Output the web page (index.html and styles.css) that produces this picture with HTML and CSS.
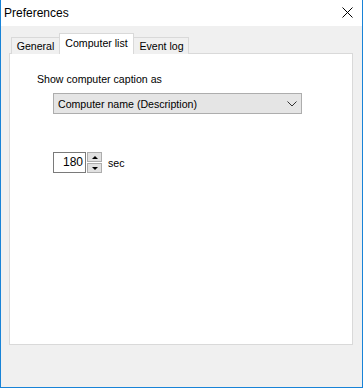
FILE: index.html
```html
<!DOCTYPE html>
<html lang="en">
  <head>
    <meta charset="UTF-8" />
    <meta name="viewport" content="width=device-width, initial-scale=1.0" />
    <title>Preferences</title>

    <link rel="stylesheet" href="styles.css">
  </head>
  <body>
    <div class="window">
      <div class="titlebar">
        <span class="title">Preferences</span>
        <svg class="close" width="11" height="11" viewBox="0 0 11 11">
          <path d="M0.5 0.5 L10.5 10.5 M10.5 0.5 L0.5 10.5" stroke="#000" stroke-width="1" fill="none" />
        </svg>
      </div>

      <div class="content">
        <div class="tabs">
          <div class="tab tab-general">General</div>
          <div class="tab tab-list active">Computer list</div>
          <div class="tab tab-log">Event log</div>
        </div>

        <div class="panel">
          <div class="caption">Show computer caption as</div>
          <div class="select">
            <span>Computer name (Description)</span>
            <svg width="10" height="6" viewBox="0 0 10 6">
              <path d="M0.5 0.5 L5 5 L9.5 0.5" stroke="#333" stroke-width="1" fill="none" />
            </svg>
          </div>

          <div class="spin-row">
            <div class="spin-input">180</div>
            <div class="spin-buttons">
              <div class="spin-btn"><span class="arrow-up"></span></div>
              <div class="spin-btn"><span class="arrow-down"></span></div>
            </div>
            <span class="unit">sec</span>
          </div>
        </div>
      </div>
    </div>
  </body>
</html>
```

FILE: styles.css
```css
body {
  margin: 0;
  font-family: "Liberation Sans", Arial, sans-serif;
  font-size: 10.6px;
  color: #000;
}

.window {
  width: 363px;
  height: 388px;
  box-sizing: border-box;
  border: 1px solid #1883d7;
  border-top: none;
  background: #f0f0f0;
}

.titlebar {
  height: 26px;
  background: #fff;
  display: flex;
  justify-content: space-between;
  align-items: center;
  padding: 0 9px 0 3px;
}

.title {
  font-size: 12px;
  margin-top: -1px;
}

.close {
  margin-top: -2px;
}

.content {
  padding: 8px 9px 0 8px;
}

.tabs {
  display: flex;
  align-items: flex-end;
  margin-left: 2px;
  height: 20px;
  margin-bottom: -1px;
  position: relative;
}

.tab {
  height: 17px;
  box-sizing: border-box;
  border: 1px solid #d9d9d9;
  border-bottom: none;
  background: #f0f0f0;
  padding-top: 2px;
  text-align: center;
  line-height: 13px;
}

.tab-general {
  width: 48px;
  border-right: none;
}

.tab-list {
  width: 75px;
}

.tab-log {
  width: 55px;
  border-left: none;
  padding-left: 1px;
}

.tab.active {
  height: 21px;
  background: #fff;
  padding-top: 3px;
  position: relative;
  z-index: 1;
}

.panel {
  height: 292px;
  box-sizing: border-box;
  border: 1px solid #d9d9d9;
  background: #fff;
  padding: 19px 0 0 27px;
}

.caption {
  line-height: 13px;
}

.select {
  margin: 7px 0 0 16px;
  width: 249px;
  height: 21px;
  box-sizing: border-box;
  border: 1px solid #adadad;
  background: #e5e5e5;
  display: flex;
  justify-content: space-between;
  align-items: center;
  padding: 0 4px 0 4px;
}

.spin-row {
  margin: 38px 0 0 16px;
  display: flex;
  align-items: center;
}

.spin-input {
  width: 33px;
  height: 21px;
  box-sizing: border-box;
  border: 1px solid #7a7a7a;
  text-align: right;
  padding-right: 2px;
  line-height: 19px;
  font-size: 12px;
}

.spin-buttons {
  display: flex;
  flex-direction: column;
  gap: 1px;
  margin-left: 1px;
  height: 21px;
}

.spin-btn {
  width: 15px;
  height: 10px;
  box-sizing: border-box;
  border: 1px solid #adadad;
  background: #e1e1e1;
  display: flex;
  justify-content: center;
  align-items: center;
}

.arrow-up {
  border-left: 3px solid transparent;
  border-right: 3px solid transparent;
  border-bottom: 3px solid #000;
}

.arrow-down {
  border-left: 3px solid transparent;
  border-right: 3px solid transparent;
  border-top: 3px solid #000;
}

.unit {
  margin-left: 6px;
}
```
